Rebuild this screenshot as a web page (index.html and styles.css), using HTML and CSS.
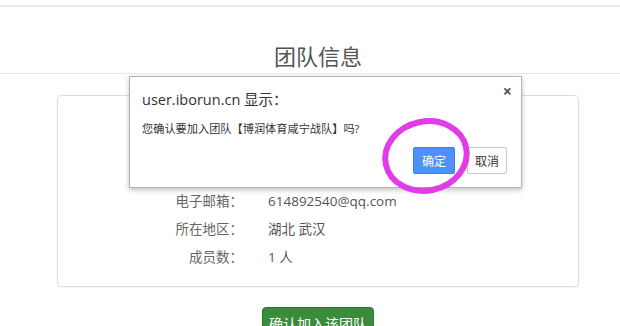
FILE: index.html
```html
<!DOCTYPE html>
<html lang="zh-CN">
<head>
    <meta charset="UTF-8">
    <meta name="viewport" content="width=device-width, initial-scale=1.0">
    <title>团队信息</title>
    <link rel="stylesheet" href="styles.css">
</head>
<body>
    <div class="topbar"></div>

    <header class="page-head">
        <h1>团队信息</h1>
    </header>

    <section class="container">
        <div class="card">
            <div class="row"><span class="label">电子邮箱：</span><span class="value">614892540@qq.com</span></div>
            <div class="row"><span class="label">所在地区：</span><span class="value">湖北 武汉</span></div>
            <div class="row"><span class="label">成员数：</span><span class="value">1 人</span></div>
        </div>
        <div class="actions">
            <button class="btn-join" type="button">确认加入该团队</button>
        </div>
    </section>

    <div class="dialog">
        <div class="dialog-title">user.iborun.cn 显示：</div>
        <span class="dialog-close">×</span>
        <div class="dialog-msg">您确认要加入团队【博润体育咸宁战队】吗?</div>
        <div class="dialog-buttons">
            <button class="btn-ok" type="button">确定</button>
            <button class="btn-cancel" type="button">取消</button>
        </div>
    </div>

    <svg class="mark" width="96" height="84" viewBox="0 0 96 84">
        <ellipse cx="48" cy="41" rx="41" ry="34.5" transform="rotate(-12 48 41)" fill="none" stroke="#e23ce6" stroke-width="6"/>
    </svg>
</body>
</html>
```

FILE: styles.css
```css
* {
    margin: 0;
    padding: 0;
    box-sizing: border-box;
}
body {
    font-family: "Open Sans", "Noto Sans CJK SC", sans-serif;
    background-color: #ffffff;
    color: #555;
    font-size: 14px;
    overflow: hidden;
}

.topbar {
    height: 7px;
    border-bottom: 2px solid #ebebeb;
}

.page-head {
    padding-top: 34px;
    padding-bottom: 2px;
    border-bottom: 1px solid #e6e6e6;
}
.page-head h1 {
    font-size: 22px;
    font-weight: normal;
    line-height: 30px;
    text-align: center;
    color: #555;
    padding-left: 16px;
}

.container {
    width: 522px;
    margin: 21px 0 0 57px;
}

.card {
    border: 1px solid #dedede;
    border-radius: 4px;
    box-shadow: 0 1px 2px rgba(0, 0, 0, 0.05);
    padding: 91px 0 15px;
}

.row {
    display: flex;
    height: 28px;
    line-height: 28px;
}
.label {
    width: 185px;
    text-align: right;
    font-size: 13.5px;
    color: #666;
}
.value {
    margin-left: 25px;
    font-size: 13.5px;
    color: #555;
}

.actions {
    display: flex;
    justify-content: center;
    margin-top: 20px;
}
.btn-join {
    font-family: inherit;
    font-size: 14px;
    white-space: nowrap;
    color: #fff;
    background-color: #3b8b3d;
    border: 1px solid #2f7431;
    border-radius: 4px;
    padding: 6px 0;
    width: 112px;
    line-height: 20px;
}

.dialog {
    position: absolute;
    left: 129px;
    top: 76px;
    width: 393px;
    height: 112px;
    background: #fff;
    border: 1px solid #b4b4b4;
    box-shadow: 0 2px 5px rgba(0, 0, 0, 0.25);
    padding: 12px 14px 0 12px;
    color: #333;
}
.dialog-title {
    font-size: 14.5px;
    line-height: 21px;
}
.dialog-close {
    position: absolute;
    right: 9px;
    top: 3px;
    font-size: 16px;
    font-weight: bold;
    color: #555;
}
.dialog-msg {
    font-size: 11.2px;
    line-height: 16px;
    margin-top: 11px;
}
.dialog-buttons {
    display: flex;
    justify-content: flex-end;
    gap: 12px;
    margin-top: 10px;
}
.dialog-buttons button {
    font-family: inherit;
    font-size: 12px;
    height: 27px;
    border-radius: 2px;
}
.btn-ok {
    width: 42px;
    color: #fff;
    background: #4d90fe;
    border: 1px solid #3d7fe8;
}
.btn-cancel {
    width: 40px;
    color: #333;
    background: #fff;
    border: 1px solid #c8c8c8;
}

.mark {
    position: absolute;
    left: 378px;
    top: 115px;
}
```
